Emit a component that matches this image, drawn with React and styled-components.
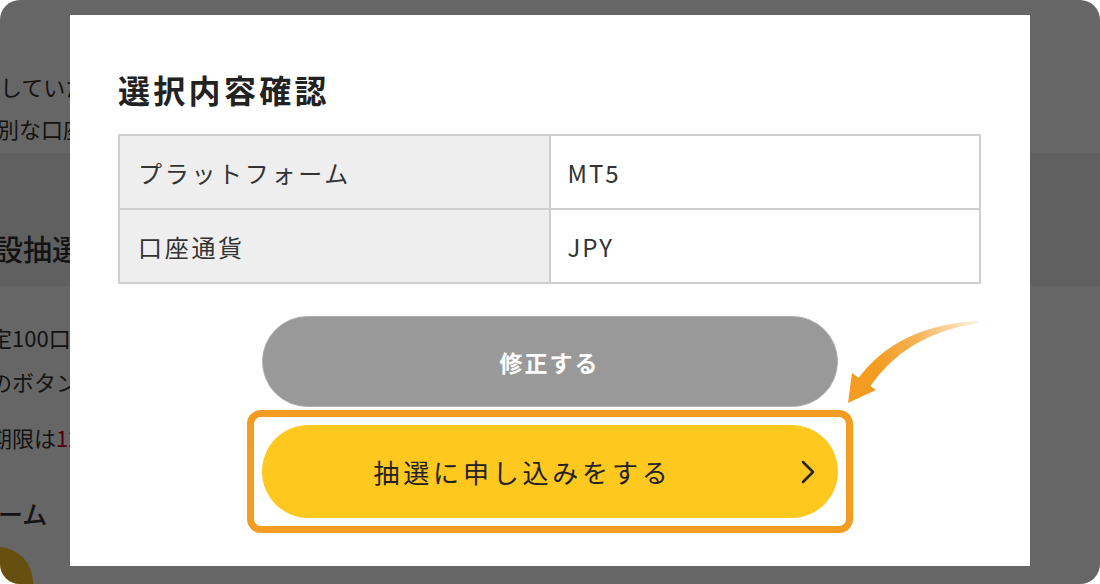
import styled, { createGlobalStyle } from "styled-components";

const GlobalStyle = createGlobalStyle`
  html, body {
    margin: 0;
    padding: 0;
    background: #fff;
  }
  body {
    font-family: "Noto Sans CJK JP", "Noto Sans", sans-serif;
  }
`;

// whole shot, rounded corners
const Frame = styled.div`
  position: relative;
  width: 1100px;
  height: 584px;
  border-radius: 20px;
  overflow: hidden;
  background: #fff;
`;

// the page behind the dialog
const Page = styled.div`
  color: #333;
  padding-top: 65px;
`;

const Line = styled.p`
  margin: ${(p) => p.$top || 0}px 0 0 ${(p) => p.$indent || 0}px;
  font-size: 22px;
  line-height: ${(p) => p.$lh || 42}px;
  white-space: nowrap;
`;

const Band = styled.div`
  margin-top: 4px;
  height: 133px;
  box-sizing: border-box;
  padding-top: 75px;
  background: #f0f0f0;
`;

const BgHeading = styled.h2`
  margin: ${(p) => p.$top || 0}px 0 0 ${(p) => p.$indent || 0}px;
  font-size: ${(p) => p.$size || 29}px;
  line-height: 40px;
  font-weight: 500;
  white-space: nowrap;
`;

const Red = styled.span`
  color: #d0021b;
`;

const Dot = styled.div`
  margin: 14px 0 0 -37px;
  width: 70px;
  height: 70px;
  border-radius: 50%;
  background: #fdc82a;
`;

const Overlay = styled.div`
  position: absolute;
  inset: 0;
  background: rgba(0, 0, 0, 0.6);
  display: flex;
  justify-content: center;
  align-items: flex-start;
  padding-top: 15px;
`;

const Modal = styled.div`
  width: 960px;
  height: 551px;
  box-sizing: border-box;
  background: #fff;
  padding: 55px 49px 0 48px;
  display: flex;
  flex-direction: column;
  align-items: center;
`;

const Title = styled.h1`
  align-self: stretch;
  margin: 0;
  font-size: 32px;
  line-height: 38px;
  font-weight: 700;
  letter-spacing: 3.3px;
  color: #222;
`;

const Table = styled.table`
  margin-top: 26px;
  width: 100%;
  border-collapse: collapse;
  border: 2px solid #cfcfcf;
  color: #333;
  font-size: 24px;
  letter-spacing: 2.7px;

  td {
    border: 2px solid #cfcfcf;
    height: 74px;
    padding: 0 0 0 18px;
    width: 50%;
    box-sizing: border-box;
  }
`;

const Label = styled.td`
  background: #eeeeee;
`;

const Value = styled.td`
  background: #fff;
  letter-spacing: 2px;
  && {
    padding-left: 17px;
  }
`;

const Actions = styled.div`
  margin-top: 32px;
  display: flex;
  flex-direction: column;
  align-items: center;
`;

const BackButton = styled.button`
  width: 576px;
  height: 91px;
  border: 1px solid #b0b0b0;
  border-radius: 46px;
  background: #999999;
  color: #fff;
  font-family: inherit;
  font-size: 23px;
  font-weight: 700;
  letter-spacing: 2px;
  cursor: pointer;
`;

const Highlight = styled.div`
  margin-top: 3px;
  border: 7px solid #f39c22;
  border-radius: 14px;
  padding: 8px;
  background: #fff;
`;

const ApplyButton = styled.button`
  width: 576px;
  height: 93px;
  border: none;
  border-radius: 47px;
  background: #fec81e;
  color: #222;
  font-family: inherit;
  font-size: 26px;
  letter-spacing: 3.8px;
  display: flex;
  align-items: center;
  justify-content: space-between;
  padding: 0 23px 0 112px;
  cursor: pointer;
`;

const Pointer = styled.svg`
  position: absolute;
  left: 0;
  top: 0;
  pointer-events: none;
`;

const Chevron = () => (
  <svg width="14" height="24" viewBox="0 0 14 24">
    <polyline
      points="2,2 12,12 2,22"
      fill="none"
      stroke="#222"
      strokeWidth="2.5"
      strokeLinecap="round"
      strokeLinejoin="round"
    />
  </svg>
);

export default function App() {
  return (
    <>
      <GlobalStyle />
      <Frame>
        <Page>
          <Line>していただくことで、</Line>
          <Line $indent={-3}>別な口座として管理できます。</Line>
          <Band>
            <BgHeading $indent={-6}>設抽選のお申し込み</BgHeading>
          </Band>
          <Line $top={29} $lh={44} $indent={-10}>定100口座限定の抽選です。</Line>
          <Line $lh={44} $indent={-10}>のボタンからお申し込みください。</Line>
          <Line $top={12} $lh={44} $indent={-10}>
            期限は<Red>12月31日</Red>までです。
          </Line>
          <BgHeading $top={34} $size={25} $indent={-2}>ーム</BgHeading>
          <Dot />
        </Page>

        <Overlay>
          <Modal>
            <Title>選択内容確認</Title>
            <Table>
              <tbody>
                <tr>
                  <Label>プラットフォーム</Label>
                  <Value>MT5</Value>
                </tr>
                <tr>
                  <Label>口座通貨</Label>
                  <Value>JPY</Value>
                </tr>
              </tbody>
            </Table>
            <Actions>
              <BackButton>修正する</BackButton>
              <Highlight>
                <ApplyButton>
                  <span>抽選に申し込みをする</span>
                  <Chevron />
                </ApplyButton>
              </Highlight>
            </Actions>
          </Modal>
        </Overlay>

        <Pointer width="1100" height="584" viewBox="0 0 1100 584">
          <defs>
            <linearGradient id="arrowFade" gradientUnits="userSpaceOnUse" x1="978" y1="322" x2="880" y2="372">
              <stop offset="0" stopColor="#f39c22" stopOpacity="0.15" />
              <stop offset="0.6" stopColor="#f39c22" stopOpacity="0.8" />
              <stop offset="1" stopColor="#f39c22" stopOpacity="1" />
            </linearGradient>
          </defs>
          <path d="M978 321 Q897 325 857 380 L869 388 Q905 334 978 323 Z" fill="url(#arrowFade)" />
          <polygon points="848,403 852,373 876,390" fill="#f39c22" />
        </Pointer>
      </Frame>
    </>
  );
}
